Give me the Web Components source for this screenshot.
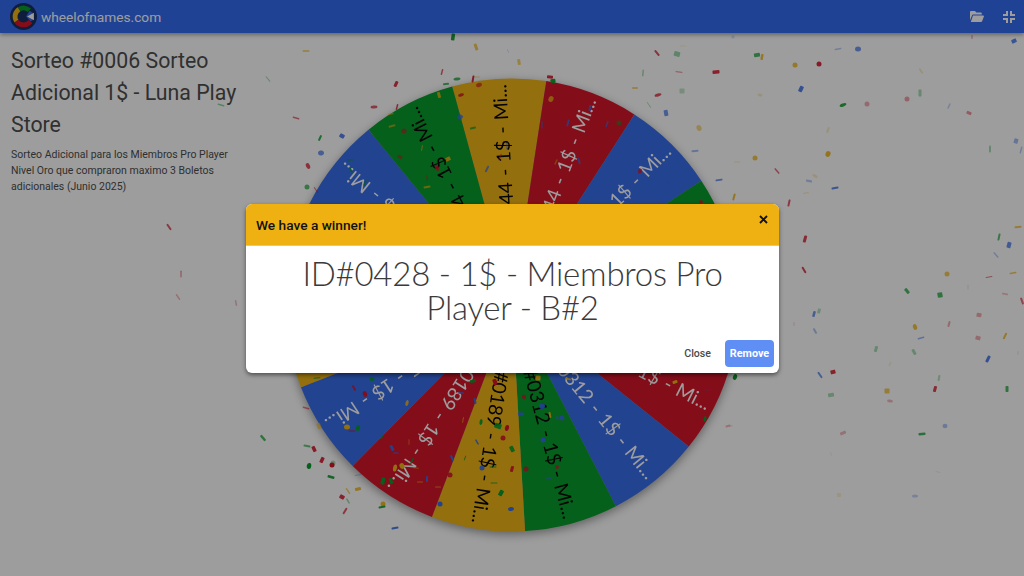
<!DOCTYPE html>
<html><head><meta charset="utf-8"><title>wheelofnames.com</title>
<style>
html,body{margin:0;width:1024px;height:576px;overflow:hidden;background:#fff}
body{font-family:Roboto,"Liberation Sans",sans-serif}
wn-app{display:block;position:relative;width:1024px;height:576px}
</style></head>
<body>
<wn-app>
  <wn-main>
    <wn-info slot="info">
      <span slot="title">Sorteo #0006 Sorteo Adicional 1$ - Luna Play Store</span>
      Sorteo Adicional para los Miembros Pro Player Nivel Oro que compraron maximo 3 Boletos adicionales (Junio 2025)
    </wn-info>
    <wn-wheel slot="wheel"></wn-wheel>
  </wn-main>
  <wn-confetti></wn-confetti>
  <wn-header>wheelofnames.com</wn-header>
  <wn-modal>
    <span slot="title">We have a winner!</span>
    ID#0428 - 1$ - Miembros Pro Player - B#2
  </wn-modal>
</wn-app>
<script>
function def(name, html, init){
  customElements.define(name, class extends HTMLElement{
    constructor(){super();this.attachShadow({mode:'open'}).innerHTML=html;if(init)init(this.shadowRoot)}
  });
}
def('wn-header',`<style>
:host{display:flex;align-items:center;height:33px;width:1024px;box-sizing:border-box;background:#3068f0;box-shadow:0 2px 4px rgba(0,0,0,.35);position:absolute;left:0;top:0;padding:0 9px 0 10px;color:#fff;font:400 13.7px Roboto,sans-serif}
.logo{width:27px;height:27px;margin-right:4px;flex:none}
.name{flex:1}
.ic{display:block;flex:none}
</style>
<svg class="logo" viewBox="0 0 26 26">
<circle cx="13" cy="13" r="13" fill="#122a5c"/>
<g fill="none" stroke-width="4.6">
<path d="M6.2 17.5A8.2 8.2 0 0 1 8.8 6" stroke="#eeb211"/>
<path d="M8.8 6A8.2 8.2 0 0 1 18.6 7" stroke="#009925"/>
<path d="M19.6 17.8A8.2 8.2 0 0 1 6.2 17.5" stroke="#d50f25"/>
</g>
<path d="M18.8 7.5 21.8 9.5 21.8 16.5 19.8 17.8 15.5 13Z" fill="#3369e8"/>
<path d="M16.5 13 23 9.5V16.5Z" fill="#fff"/>
</svg>
<span class="name"><slot></slot></span>
<svg class="ic" style="margin-right:19px" width="14" height="11" viewBox="0 0 14 11" fill="#fff"><path d="M0 1.2C0 .5.5 0 1.2 0H5l1.3 1.4h4.4c.6 0 1.1.5 1.1 1.1V3.6H3.2C2.6 3.6 2.2 4 2 4.4L0 9.2Z"/><path d="M3 4.4h10.2c.5 0 .9.5.7 1L12.2 10c-.2.6-.7 1-1.3 1H.8Z"/></svg>
<svg class="ic" width="12" height="12" viewBox="0 0 12 12" fill="none" stroke="#fff" stroke-width="2"><path d="M4 0V4H0M8 0V4H12M4 12V8H0M8 12V8H12"/></svg>`);

def('wn-main',`<style>
:host{display:grid;grid-template-columns:250px 524px 250px;padding-top:33px}
.c{display:flex;justify-content:center;padding-top:37px}
</style><div><slot name="info"></slot></div><div class="c"><slot name="wheel"></slot></div>`);

def('wn-info',`<style>
:host{display:block;padding:12px 0 0 11px;color:#4a4a4a;font:400 10.5px/16px Roboto,sans-serif;width:228px}
h1{margin:0 0 6px;font:400 21.3px/32px Roboto,sans-serif;color:#4a4a4a}
</style><h1><slot name="title"></slot></h1><div><slot></slot></div>`);

def('wn-wheel',`<style>
:host{display:block;width:470px;height:470px;flex:none}
svg{display:block;overflow:visible;filter:drop-shadow(0 3px 5px rgba(0,0,0,.4))}
text{font:400 19.2px Lato,"Noto Sans",sans-serif;word-spacing:1.5px}
</style><svg width="470" height="470" viewBox="-235 -235 470 470"></svg>`,root=>{
  const svg=root.querySelector('svg');
  const C={y:'#eeb211',r:'#d50f25',b:'#3369e8',g:'#009925'};
  const seq='yrbgyrbgyrbyrbg';
  const ids=['0744','0744','0744','0744','0428','0312','0312','0312','0189','0189','0125','0125','0744','0744','0744'];
  const R=226.5,N=15,st=360/N,off=-15.3;
  let h='';
  for(let i=0;i<N;i++){
    const a0=(off+i*st-90)*Math.PI/180,a1=(off+(i+1)*st-90)*Math.PI/180;
    h+=`<path d="M0 0L${(R*Math.cos(a0)).toFixed(2)} ${(R*Math.sin(a0)).toFixed(2)}A${R} ${R} 0 0 1 ${(R*Math.cos(a1)).toFixed(2)} ${(R*Math.sin(a1)).toFixed(2)}Z" fill="${C[seq[i]]}"/>`;
  }
  for(let i=0;i<N;i++){
    const m=off+(i+.5)*st-90, dark=seq[i]=='y'||seq[i]=='g';
    h+=`<text transform="rotate(${m.toFixed(2)})" x="221" y="7" text-anchor="end" fill="${dark?'#000':'#fff'}">ID#${ids[i]} - 1$ - Mi...</text>`;
  }
  svg.innerHTML=h;
});

def('wn-confetti',`<style>
:host{display:block;position:absolute;left:0;top:0;width:1024px;height:576px;pointer-events:none}
svg{display:block}
</style><svg width="1024" height="576" viewBox="0 0 1024 576"></svg>`,root=>{
  const C={y:'#eeb211',r:'#d50f25',b:'#3369e8',g:'#009925'};
  // x y w h rotation colour opacity shape(e=ellipse)
  const d=`757 55 6 4 -10 g .7|762 57 2.5 6 10 y .8|733 37 3 3 0 b .2|795 65 5 5 0 y .8 e|819 64 5 5 0 r .9 e|838 49 7 1.5 -10 b .35|858 49 6 5 0 b .7 e|1014 41 5 4 -25 b .8|972 37 2 4 0 r .25|921 71 1.5 6 -35 y .3|801 89 4 6 25 b .85|760 95 5 3 10 y .25 e|843 105 7 3 -20 g .85 e|867 104 5 5 0 r .35 e|907 99 5 5 0 r .4 e|920 93 3 7 0 g .35|949 106 1.5 6 25 b .3|969 113 5 3 25 r .45|828 130 2 6 20 y .25|990 149 2 7 0 g .35|1016 141 4 5 15 b .45|1021 150 1.5 7 15 b .35|755 158 5 5 0 y .75 e|828 154 5 6 20 y .9 e|737 162 6 1 0 y .25|777 171 1.5 7 -40 r .6|809 181 6 2.5 10 b .35|815 176 6 3 30 y .25 e|835 188 7 2 -12 b .8|806 193 6 1 -5 y .3|789 203 2 7 12 r .7|734 197 2 7 15 y .85|1018 227 7 2 -5 y .7|999 237 2 7 12 g .65|1009 245 4 6 15 b .75|996 255 1.5 7 -40 b .35|805 239 3 7 15 r .8|804 270 2 7 -30 r .8|947 274 5 5 0 y .7 e|989 277 7 1 -10 r .55|1013 273 7 1.5 -10 y .7|
  907 291 3 6 -40 g .7|940 295 5 5 -10 g .7|968 287 1 5 0 g .15|1005 294 6 2 10 r .25|1022 301 2 7 -20 r .6|819 311 3 5 15 g .3|814 314 2.5 6 15 b .7|794 324 1 4 0 r .2|815 331 2 6 -30 b .4|979 315 5 4 10 r .35|949 324 2 6 15 r .35|915 327 4 6 -20 y .8 e|921 338 7 1.5 -15 b .5|978 338 5 4 15 r .35|1005 336 2 7 25 y .8|876 349 3 6 15 g .35|914 352 3 6 -30 g .35|1018 353 1 4 0 g .15|988 359 3 7 25 b .85|890 364 1.5 5 20 y .2|735 377 4 6 20 g 1 e|833 372 5 4 -15 r .85|820 375 2 7 -35 b .7|939 378 2 6 10 g .3|831 395 6 4 -10 g .35|887 391 5 5 0 y .7|935 389 3 6 15 r .8|1007 389 3 6 0 g .7|890 401 6 3 10 r .3 e|945 426 5 4.5 0 b .4 e|843 433 6 3 -25 r .3|922 434 7 2.5 -5 g .75|731 426 3 1 -10 r .25|831 454 1 4 -15 g .1|938 472 5 1 15 g .1|839 495 4 4 0 y .2|915 496 6 3 0 b .3 e|
  306 51 7 1.5 0 y .7|268 79 1 7 -40 g .35|221 105 7 1.5 15 g .45|296 118 7 1.5 15 r .6|396 84 3 6 25 r .85|374 107 7 3 -5 r .7 e|320 138 2 6 25 g .8|342 136 5 4 30 b .85|321 153 6 5 -15 b .7 e|308 166 4 6 -25 r .75 e|307 187 5 5 0 g .65 e|316 190 1 7 -35 r .6|169 227 2 7 -35 r .7|181 274 1.5 7 0 r .4|178 297 1.5 7 -35 r .3|236 303 1.5 6 -10 r .3|
  306 408 7 1.5 15 r .55|319 426 4 6 -20 y .55|263 438 2.5 7 -40 g .7|307 446 7 2 12 g .6|314 449 3.5 6 -25 r .9|322 460 3.5 6 25 r .9|333 463 5 5 0 g .35 e|332 465 5 5 0 r 1 e|309 466 4.5 6 10 g 1 e|331 477 7 2.5 15 g .9|348 491 1.5 7 -35 y .6|358 489 6 3 -15 y .85|342 497 5 4 30 r .85|348 501 1.5 6 -30 g .4|345 511 2 7 30 r .7|383 504 5 5 0 y .95 e|382 507 7 2 -10 g .9|395 528 7 2 -12 b .9|358 475 7 1 -10 b .35|
  372 379 5 4 0 g .9 e|354 388 2 6 -30 r .8|365 394 4 6 -20 r 1 e|347 427 6 5 0 y 1 e|358 428 4 6 15 g 1 e|352 431 7 1 0 r .8|317 378 7 1 -5 g .8|382 437 1.5 5 35 g .8|392 448 3 6 -30 b .9|395 468 4 7 10 y 1 e|383 481 4 7 15 g 1|391 481 3 6 -20 g 1|407 403 3 6 15 y .9 e|396 453 6 1 0 b .9|409 442 1 6 0 y .5|402 466 5 6 -20 y 1 e|412 461 1.5 7 25 g .9|427 479 2 6 0 b .9|420 482 6 1 0 y .7|416 468 6 1 5 y .6|438 487 6 1 0 y .7|452 458 2 6 -25 b 1|450 475 5 5 0 r .9 e|440 504 5 5 0 b 1 e|475 401 2 6 -15 b .9|473 381 6 3 -15 g .9|461 393 6 1.5 0 b .9|463 420 1 6 10 y .7|481 422 3 6 10 g .9 e|477 442 1.5 6 -30 b .9|465 458 1 5 20 g .8|482 468 5 5 0 b .9 e|493 467 7 1 0 g .9|494 483 7 1 0 g .8|501 493 4 6 30 g 1|511 509 6 4 -10 b 1 e|512 449 4 6 -25 g .9|503 438 5 5 0 r .9 e|507 428 4 6 15 r 1 e|498 426 7 5 20 g .9|495 382 4 6 -20 r 1|521 414 6 3 0 b .9|512 469 3 6 15 r .9|517 463 1 7 20 y .6|526 469 5 5 -10 r .8 e|524 397 4 5 -20 r .8 e|538 378 5 5 0 y 1|542 406 6 6 0 b .95 e|562 418 5 5 0 b .9 e|543 440 5 5 0 b 1 e|557 418 4 4 0 b .5 e|550 415 2 6 -10 y .9|557 467 4 4 0 r .7 e|549 478 6 1.5 0 b .8|568 379 6 2 10 y .9|675 382 5 3 -20 y 1|705 419 3 6 10 g 1 e|728 426 5 2 -15 r .3|708 390 6 1 -10 b .3|
  442 72 1.5 6 15 r .7|446 84 6 2 -5 g .7|457 79 7 3 -8 g .75 e|473 79 2 7 10 r .9|477 77 6 1.5 0 y .35|550 77 6 3 5 r .9|553 81 5 4 -10 g .95|479 85 6 4 -20 r .65 e|461 95 6 3 -15 r .85 e|439 95 3 6 -15 y .8|551 99 5 6 25 y .8 e|397 107 1.5 6 15 r .8|391 114 6 1.5 -15 y .55|392 126 7 2 -15 y .6|404 131 5 5 0 r .6 e|400 157 5 3 30 r .55|460 117 5 5 30 b .75|473 128 6 2 -15 g .7|422 148 1 6 10 y .7|448 159 5 4 -25 y .85|437 168 4 6 -25 r .85 e|427 178 1 6 -10 r .6|427 187 7 2 -10 y .7|487 169 2 7 25 b .7|500 157 1.5 7 25 r .5|507 146 1.5 7 0 b .6|542 125 1.5 7 0 b .55|568 123 2 7 15 b .75|590 108 2.5 6 10 b .7|607 124 1.5 7 20 b .7|619 123 5 5 0 g .55 e|579 161 2 7 -15 b .7|556 162 1.5 6 25 y .5|640 171 4 5 30 r .75 e|667 182 1 6 -40 b .5|701 202 4 4 0 r .8 e|643 73 1.5 7 5 g .35|679 72 7 1.5 8 r .4|716 72 7 3.5 -3 r .85|658 95 7 3 -15 r .75 e|682 91 5 5 0 g .25|649 105 1 7 -35 g .3|635 88 6 2 0 y .55|666 113 4 6 -10 b .7|699 128 5 6 -25 y .5 e|695 151 7 2 -5 b .45|719 180 7 2 -8 b .7|350 160 6 1 0 g .8|351 170 1.5 6 -30 g .9|365 183 1.5 6 25 g .8|
  453 37 3.5 7 8 g .9|476 47 3 7 -18 y .7|519 62 3 6 -10 y .6|508 51 1 4 -20 b .2|657 53 2 7 -40 r .75|677 54 6 5 15 g .4|683 46 6 1 0 y .2`;
  const out=d.split('|').map(s=>s.trim()).filter(Boolean).map(s=>{
    const p=s.split(' ');const [x,y,w,h,r]=p.map(Number);const c=C[p[5]],o=p[6],e=p[7];
    const t=`transform="translate(${x} ${y}) rotate(${r})" fill="${c}" opacity="${o}"`;
    return e?`<ellipse rx="${w/2}" ry="${h/2}" ${t}/>`:`<rect x="${-w/2}" y="${-h/2}" width="${w}" height="${h}" rx=".8" ${t}/>`;
  }).join('');
  root.querySelector('svg').innerHTML=out;
});

def('wn-modal',`<style>
:host{display:flex;align-items:center;justify-content:center;position:absolute;left:0;top:0;width:1024px;height:576px;background:rgba(10,10,10,.4)}
.card{width:533px;background:#fff;border-radius:6px;overflow:hidden;box-shadow:0 2px 4px rgba(0,0,0,.5);margin:1px 0 0 1px;display:flex;flex-direction:column}
header{height:42px;background:#efb111;display:flex;align-items:center;padding:0 11px 0 10px;color:#111;font:500 13.7px Roboto,sans-serif;box-sizing:border-box;border-bottom:1px solid #f6c94c}
header .t{flex:1}
.x{align-self:flex-start;margin-top:11px;display:block}
.body{padding:10px 30px 0;text-align:center;font:300 33px/34px Lato,"Noto Sans",sans-serif;color:#3a3a3a;letter-spacing:-.25px}
footer{display:flex;justify-content:flex-end;align-items:center;gap:14px;padding:16px 5px 6px 0}
.close{font:500 10.6px Roboto,sans-serif;color:#4a4a4a}
.rem{width:49px;height:27px;display:flex;align-items:center;justify-content:center;background:#5f8ff5;color:#fff;font:700 10.8px Roboto,sans-serif;border-radius:4px}
</style>
<div class="card">
<header><span class="t"><slot name="title"></slot></span>
<svg class="x" width="9" height="9" viewBox="0 0 9 9" stroke="#111" stroke-width="1.9" fill="none"><path d="M1 1 8 8M8 1 1 8"/></svg></header>
<div class="body"><slot></slot></div>
<footer><span class="close">Close</span><span class="rem">Remove</span></footer>
</div>`);
</script>
</body></html>
